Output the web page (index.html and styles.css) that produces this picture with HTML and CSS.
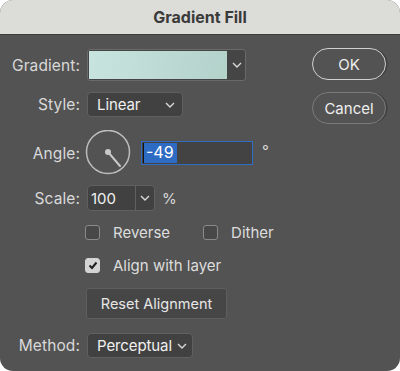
FILE: index.html
```html
<!DOCTYPE html>
<html lang="en">
<head>
    <meta charset="UTF-8">
    <title>Gradient Fill</title>
    <link rel="stylesheet" href="styles.css">
</head>
<body>
    <div class="dialog">
        <div class="titlebar">Gradient Fill</div>
        <div class="panel">
            <div class="form">
                <div class="row gradient-row">
                    <span class="label">Gradient:</span>
                    <div class="swatch-box">
                        <div class="swatch"></div>
                        <div class="swatch-arrow">
                            <svg width="10" height="6" viewBox="0 0 10 6"><polyline points="1,1 5,5 9,1" fill="none" stroke="#d8d8d8" stroke-width="1.4"/></svg>
                        </div>
                    </div>
                </div>
                <div class="row style-row">
                    <span class="label">Style:</span>
                    <div class="select select-style">
                        <span>Linear</span>
                        <svg width="10" height="6" viewBox="0 0 10 6"><polyline points="1,1 5,5 9,1" fill="none" stroke="#d8d8d8" stroke-width="1.4"/></svg>
                    </div>
                </div>
                <div class="row angle-row">
                    <span class="label">Angle:</span>
                    <svg class="dial" width="46" height="46" viewBox="0 0 46 46">
                        <circle cx="23" cy="22" r="21.5" fill="none" stroke="#bdbdbd" stroke-width="1.5"/>
                        <line x1="23" y1="22" x2="35" y2="36" stroke="#c8c8c8" stroke-width="2" stroke-linecap="round"/>
                        <circle cx="23" cy="22" r="3" fill="#c8c8c8"/>
                    </svg>
                    <div class="angle-input"><span class="sel">-49</span></div>
                    <span class="unit deg">°</span>
                </div>
                <div class="row scale-row">
                    <span class="label">Scale:</span>
                    <div class="combo">
                        <span class="combo-val">100</span>
                        <span class="combo-arrow">
                            <svg width="10" height="6" viewBox="0 0 10 6"><polyline points="1,1 5,5 9,1" fill="none" stroke="#d8d8d8" stroke-width="1.4"/></svg>
                        </span>
                    </div>
                    <span class="unit">%</span>
                </div>
                <div class="row check-row first-checks">
                    <label class="check"><span class="box"></span>Reverse</label>
                    <label class="check dither"><span class="box"></span>Dither</label>
                </div>
                <div class="row check-row align-row">
                    <label class="check"><span class="box checked">
                        <svg width="10" height="9" viewBox="0 0 10 9"><polyline points="1.5,4.5 4,7 8.5,1.5" fill="none" stroke="#1e1e1e" stroke-width="2"/></svg>
                    </span>Align with layer</label>
                </div>
                <div class="row reset-row">
                    <button class="reset-btn">Reset Alignment</button>
                </div>
                <div class="row method-row">
                    <span class="label">Method:</span>
                    <div class="select select-method">
                        <span>Perceptual</span>
                        <svg width="10" height="6" viewBox="0 0 10 6"><polyline points="1,1 5,5 9,1" fill="none" stroke="#d8d8d8" stroke-width="1.4"/></svg>
                    </div>
                </div>
            </div>
            <div class="buttons">
                <button class="btn ok">OK</button>
                <button class="btn cancel">Cancel</button>
            </div>
        </div>
    </div>
</body>
</html>
```

FILE: styles.css
```css
* {
    box-sizing: border-box;
}

body {
    margin: 0;
    padding: 0;
    background: #ffffff;
    font-family: Inter, "Liberation Sans", Arial, sans-serif;
    font-size: 14px;
    color: #d9d9d9;
}

/* WINDOW */
.dialog {
    width: 400px;
    height: 371px;
    border-radius: 13px;
    overflow: hidden;
    background: #535353;
    display: flex;
    flex-direction: column;
}

.titlebar {
    height: 35px;
    background: #dcdcd8;
    border-bottom: 1px solid #3e3e3e;
    color: #3a3a3a;
    font-weight: bold;
    font-size: 16px;
    display: flex;
    align-items: center;
    justify-content: center;
}

.panel {
    flex: 1;
    display: flex;
}

/* FORM */
.form {
    display: flex;
    flex-direction: column;
    padding-top: 14px;
}

.row {
    display: flex;
    align-items: center;
}

.label {
    width: 80px;
    text-align: right;
    margin-right: 7px;
    font-size: 15.5px;
    letter-spacing: 0.1px;
}

.swatch-box {
    width: 159px;
    height: 32px;
    display: flex;
    border: 1px solid #6a6a6a;
    border-radius: 3px;
    background: #454545;
}

.swatch {
    flex: 1;
    margin: 1px;
    background: linear-gradient(100deg, #c8e4de, #b3d2ca);
}

.swatch-arrow {
    width: 17px;
    display: flex;
    align-items: center;
    justify-content: center;
}

.select {
    height: 25px;
    display: flex;
    align-items: center;
    justify-content: space-between;
    padding: 0 7px 0 9px;
    background: #414141;
    border: 1px solid #606060;
    border-radius: 4px;
    color: #f0f0f0;
    font-size: 15px;
    letter-spacing: -0.1px;
}

.style-row {
    margin-top: 11px;
}

.select-style {
    width: 96px;
}

.angle-row {
    margin-top: 13px;
}

.dial {
    margin-left: -2px;
}

.angle-input {
    width: 112px;
    height: 24px;
    margin-left: 10px;
    border: 1.5px solid #2f6dc4;
    background: #434343;
    padding: 1px 0 1px 1px;
    display: flex;
}

.angle-input .sel {
    background: #2e6bc2;
    color: #ffffff;
    font-size: 16px;
    padding: 0 3px 0 2px;
    border-left: 1px solid #111;
    line-height: 19px;
}

.unit {
    margin-left: 9px;
    font-size: 15px;
}

.deg {
    margin-top: -6px;
}

.scale-row {
    margin-top: 9px;
}

.combo {
    width: 68px;
    height: 26px;
    display: flex;
    background: #414141;
    border: 1px solid #606060;
    border-radius: 4px;
    color: #f0f0f0;
    font-size: 15px;
}

.combo-val {
    flex: 1;
    padding-left: 3px;
    display: flex;
    align-items: center;
}

.combo-arrow {
    width: 19px;
    border-left: 1px solid #606060;
    display: flex;
    align-items: center;
    justify-content: center;
}

.scale-row .unit {
    margin-left: 7px;
}

/* CHECKBOXES */
.check-row {
    padding-left: 85px;
    height: 18px;
}

.first-checks {
    margin-top: 12px;
}

.align-row {
    margin-top: 15px;
}

.check {
    display: flex;
    align-items: center;
    font-size: 15px;
    color: #dddddd;
}

.box {
    width: 15px;
    height: 15px;
    border: 1px solid #8a8a8a;
    border-radius: 3px;
    background: #484848;
    margin-right: 13px;
    display: flex;
    align-items: center;
    justify-content: center;
}

.box.checked {
    background: #d4d4d4;
    border-color: #d4d4d4;
}

.dither {
    margin-left: 33px;
}

.reset-row {
    margin-top: 14px;
    padding-left: 86px;
}

.reset-btn {
    width: 141px;
    height: 31px;
    background: #464646;
    border: 1px solid #5e5e5e;
    border-radius: 3px;
    color: #e6e6e6;
    font-family: inherit;
    font-size: 14.5px;
}

.method-row {
    margin-top: 14px;
}

.select-method {
    width: 106px;
    padding-right: 5px;
}

/* BUTTONS */
.buttons {
    margin-left: auto;
    margin-right: 14px;
    padding-top: 13px;
    display: flex;
    flex-direction: column;
    gap: 12px;
}

.btn {
    width: 74px;
    height: 32px;
    border-radius: 16px;
    background: transparent;
    font-family: inherit;
    font-size: 15px;
    color: #eeeeee;
    box-shadow: 2px 0 0 -0.5px #3e3e3e;
}

.ok {
    border: 1.5px solid #d0d0d0;
}

.cancel {
    border: 1.5px solid #7b7b7b;
}
```
